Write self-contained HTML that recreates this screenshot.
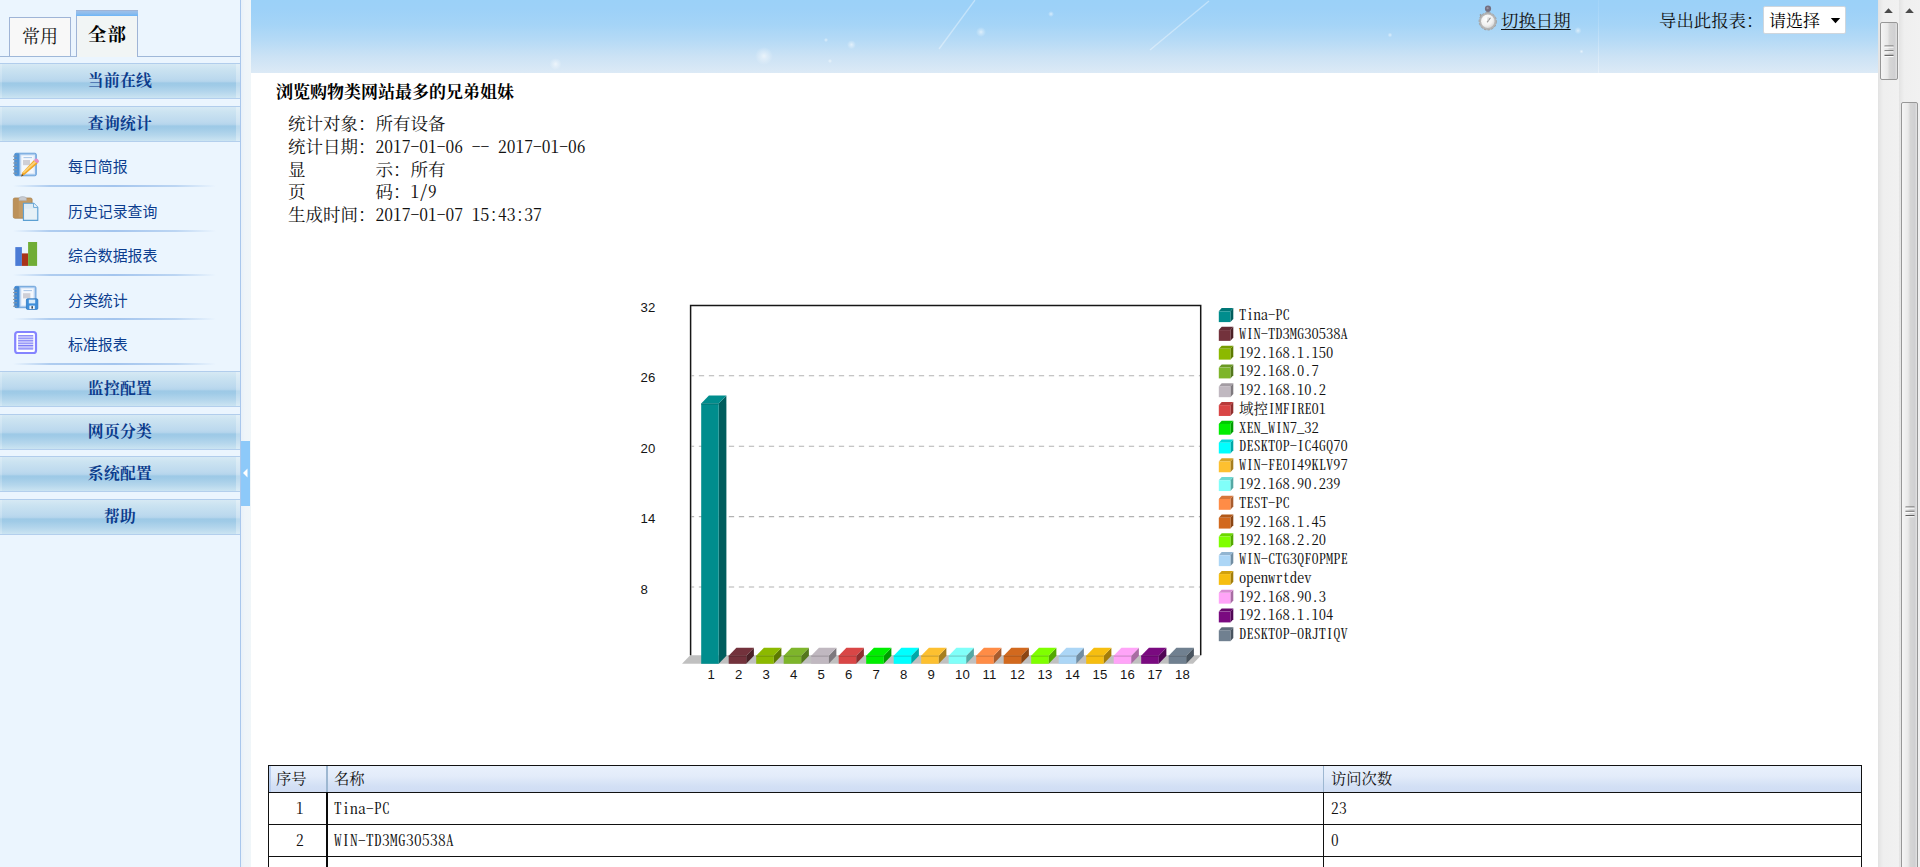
<!DOCTYPE html>
<html lang="zh-CN">
<head>
<meta charset="utf-8">
<title>浏览购物类网站最多的兄弟姐妹</title>
<style>
html,body{margin:0;padding:0;width:1920px;height:867px;overflow:hidden;background:#fff;}
body{position:relative;font-family:"Noto Serif CJK SC","Liberation Serif",serif;color:#000;}
.abs{position:absolute;}
.sun{font-family:"Noto Serif CJK SC","Liberation Serif",serif;font-feature-settings:"hwid";}
.hei{font-family:"Liberation Sans","Noto Sans CJK SC",sans-serif;}
/* ---------- sidebar ---------- */
#side{position:absolute;left:0;top:0;width:240px;height:867px;background:#ebf5fe;border-right:1px solid #a9c7ec;overflow:hidden;}
#tabline{position:absolute;left:0;top:56px;width:240px;height:1px;background:#9fb8d9;}
.tab{position:absolute;box-sizing:border-box;border:1px solid #9fb4d6;border-bottom:none;text-align:center;white-space:nowrap;}
#tab1{left:9px;top:17px;width:62px;height:39px;background:#f8f8f8;font-size:18px;line-height:35px;color:#111;}
#tab2{left:76px;top:10px;width:62px;height:47px;background:#f1f5f5;font-size:18.4px;line-height:46px;font-weight:bold;border-top:none;letter-spacing:1px;text-indent:1px;}
#tab2:before{content:"";position:absolute;left:-1px;right:-1px;top:0;height:6px;background:linear-gradient(#9cc0ea 0,#8fbdec 45%,#6db6f7 100%);border-top:1px solid #9fb4d6;box-sizing:border-box;}
.acc{position:absolute;left:0;width:240px;height:36px;box-sizing:border-box;border-top:1px solid #b1cdec;border-bottom:1px solid #b3cfed;
 background:linear-gradient(#d6e9f4 0,#cbe3f1 15%,#bcd9ee 44%,#b5d5ec 51%,#9dc9e6 56%,#a0cbe7 63%,#b4d6ec 82%,#cbe4f2 100%);
 text-align:center;font-weight:bold;font-size:15.8px;line-height:31px;color:#0b3b8c;letter-spacing:0.3px;}
.acc:after{content:"";position:absolute;left:0;right:0;top:0;bottom:0;border-left:2px solid rgba(255,255,255,.18);border-right:4px solid rgba(255,255,255,.3);}
.mi{position:absolute;left:68px;font-size:14.9px;line-height:20px;color:#0c3d8e;white-space:nowrap;}
.sep{position:absolute;left:13px;width:203px;height:2px;background:linear-gradient(90deg,rgba(168,200,238,0) 0,rgba(168,200,238,.9) 18%,#a4c5ee 50%,rgba(168,200,238,.7) 80%,rgba(168,200,238,0) 100%);}
.ico{position:absolute;left:12px;width:26px;height:26px;}
/* ---------- splitter ---------- */
#split{position:absolute;left:241px;top:0;width:10px;height:867px;background:linear-gradient(90deg,#e8f1f9,#eff5f9 40%,#f0f6f9);}
#handle{position:absolute;left:241px;top:441px;width:9px;height:64.5px;background:#8dc9f9;}
.tc{position:absolute;font-size:15.3px;line-height:22px;margin-top:-1px;letter-spacing:0.35px;white-space:nowrap;color:#111;}
/* ---------- main ---------- */
#main{position:absolute;left:251px;top:0;width:1627px;height:867px;background:#fff;overflow:hidden;}
#band{position:absolute;left:0;top:0;width:1627px;height:73px;background:linear-gradient(#9bd1f8 0,#9dd1f8 12%,#a4d4f7 33%,#b5daf6 55%,#cbe2f5 77%,#dceaf6 100%);}
</style>
</head>
<body>
<div id="side">
  <div id="tabline"></div>
  <div class="tab sun" id="tab1">常用</div>
  <div class="tab sun" id="tab2">全部</div>
  <div class="acc sun" style="top:63px">当前在线</div>
  <div class="acc sun" style="top:106px">查询统计</div>
  <div class="mi hei" style="top:157px">每日简报</div>
  <div class="sep" style="top:185px"></div>
  <div class="mi hei" style="top:202px">历史记录查询</div>
  <div class="sep" style="top:230px"></div>
  <div class="mi hei" style="top:246px">综合数据报表</div>
  <div class="sep" style="top:274px"></div>
  <div class="mi hei" style="top:291px">分类统计</div>
  <div class="sep" style="top:318px"></div>
  <div class="mi hei" style="top:335px">标准报表</div>
  <div class="sep" style="top:363px"></div>

  <!-- icon 1: notebook + pencil -->
  <svg class="abs" style="left:12px;top:152px" width="28" height="26" viewBox="0 0 28 26">
    <rect x="2.6" y="1.2" width="21.8" height="22.6" rx="1.6" fill="#8db9e8" stroke="#6da3da" stroke-width="0.9"/>
    <rect x="2.6" y="1.2" width="4.6" height="22.6" rx="1.2" fill="#4f92d4"/>
    <rect x="8.4" y="2.6" width="14.6" height="19.8" fill="#dbe8f8"/>
    <rect x="9.6" y="3.8" width="12" height="17.4" fill="#f4f8fd"/>
    <rect x="11" y="8" width="7" height="5.2" fill="#cfcfd6"/>
    <path d="M11.5 5.6H20" stroke="#9fbfe4" stroke-width="0.9"/>
    <path d="M1 4.2H5M1 7.6H5M1 11H5M1 14.4H5M1 17.8H5M1 21.2H5" stroke="#8a97a6" stroke-width="1"/>
    <path d="M21.8 8.2 L25.6 11.6 L12.8 22.6 L9.2 24.6 L10.4 20.4 Z" fill="#f3a623"/>
    <path d="M22.6 9 L24.2 10.4 L12 21.2 L10.6 20.2 Z" fill="#fbd27a"/>
    <path d="M21.8 8.2 L23.6 6.6 Q24.6 6 25.6 7 L26.8 8.4 Q27.4 9.4 26.6 10.2 L25.6 11.6 Z" fill="#e58fc8"/>
    <path d="M9.2 24.6 L10 22 L11.6 23.4 Z" fill="#5a4630"/>
  </svg>
  <!-- icon 2: clipboard + paper -->
  <svg class="abs" style="left:12px;top:196px" width="28" height="26" viewBox="0 0 28 26">
    <rect x="1.3" y="2" width="18.8" height="20.2" rx="1.6" fill="#c39a62" stroke="#a77f4b" stroke-width="0.8"/>
    <rect x="1.7" y="2.4" width="5" height="19.4" fill="#b98d55" opacity=".7"/>
    <path d="M7 2.6 Q7 0.6 10.6 0.6 Q14.4 0.6 14.4 2.6 L14.4 4.4 L7 4.4 Z" fill="#c9ccd2" stroke="#a9adb5" stroke-width="0.6"/>
    <path d="M11.4 7.2 H21.6 L25.8 11.4 V24.4 H11.4 Z" fill="#dcebf5" stroke="#5b9fd2" stroke-width="1.1" stroke-linejoin="round"/>
    <path d="M21.6 7.2 V11.4 H25.8" fill="#f6fbff" stroke="#5b9fd2" stroke-width="0.9" stroke-linejoin="round"/>
    <rect x="12.6" y="12.6" width="12" height="10.6" fill="#e9f3f8" opacity=".8"/>
  </svg>
  <!-- icon 3: bar chart -->
  <svg class="abs" style="left:12px;top:240px" width="28" height="28" viewBox="0 0 28 28">
    <rect x="3.3" y="7.1" width="6.6" height="18.8" fill="#4b7bd5"/>
    <rect x="9.9" y="13.4" width="6.2" height="12.5" fill="#a93319"/>
    <rect x="16.1" y="2" width="9" height="23.9" fill="#70ad35"/>
  </svg>
  <!-- icon 4: notebook + floppy -->
  <svg class="abs" style="left:12px;top:285px" width="28" height="26" viewBox="0 0 28 26">
    <rect x="2.6" y="1.3" width="21.4" height="21.4" rx="1.6" fill="#8db9e8" stroke="#6da3da" stroke-width="0.9"/>
    <rect x="2.6" y="1.3" width="4.6" height="21.4" rx="1.2" fill="#3f86cf"/>
    <rect x="8.4" y="2.6" width="14.2" height="18.8" fill="#dbe8f8"/>
    <rect x="9.6" y="3.8" width="11.6" height="16.4" fill="#f4f8fd"/>
    <rect x="11" y="8.2" width="7.4" height="5.2" fill="#cfcfd6"/>
    <path d="M11.5 5.6H20" stroke="#9fbfe4" stroke-width="0.9"/>
    <path d="M1 4.2H5M1 7.6H5M1 11H5M1 14.4H5M1 17.8H5M1 21.2H5" stroke="#8a97a6" stroke-width="1"/>
    <rect x="14.4" y="13.8" width="11.4" height="10.6" rx="1.2" fill="#3f8fda" stroke="#2f78c2" stroke-width="0.8"/>
    <rect x="16.8" y="14.6" width="6.4" height="3.8" fill="#d9ecfb"/>
    <rect x="17.4" y="20.6" width="5.4" height="3.4" fill="#eef6fd"/>
    <rect x="19.4" y="21.2" width="1.6" height="2.4" fill="#3a4a5a"/>
  </svg>
  <!-- icon 5: list -->
  <svg class="abs" style="left:12px;top:329px" width="28" height="28" viewBox="0 0 28 28">
    <rect x="3.2" y="3" width="20.8" height="21" rx="2.6" fill="#fff" stroke="#8484ff" stroke-width="2.2"/>
    <rect x="6.2" y="6.2" width="15" height="14.8" fill="#b9b9fa"/>
    <path d="M6.2 6.7H21.2M6.2 11.7H21.2M6.2 16.6H21.2" stroke="#7d7df6" stroke-width="1.1"/>
    <path d="M6.2 9.3H21.2M6.2 14.2H21.2M6.2 19.3H21.2" stroke="#9a9af9" stroke-width="1.6"/>
    <path d="M6.2 8H21.2M6.2 10.6H21.2M6.2 13H21.2M6.2 15.5H21.2M6.2 18H21.2" stroke="#e6e6fd" stroke-width="0.7"/>
  </svg>
  <div class="acc sun" style="top:371px">监控配置</div>
  <div class="acc sun" style="top:414px">网页分类</div>
  <div class="acc sun" style="top:456px">系统配置</div>
  <div class="acc sun" style="top:499px">帮助</div>
</div>
<div id="split"></div>
<div id="handle"><svg width="9" height="64" style="display:block"><path d="M2 32 L6.5 27.5 L6.5 36.5 Z" fill="#fff"/></svg></div>
<div id="main">
  <div id="band"></div>
  <svg class="abs" style="left:0;top:0" width="1627" height="73" viewBox="251 0 1627 73">
    <defs><radialGradient id="glow"><stop offset="0" stop-color="#fff" stop-opacity=".6"/><stop offset=".35" stop-color="#fff" stop-opacity=".35"/><stop offset="1" stop-color="#fff" stop-opacity="0"/></radialGradient></defs>
    <path d="M975 0 L939 49" stroke="#fff" stroke-opacity=".38" stroke-width="1.3"/>
    <path d="M1209 1 L1150 50" stroke="#fff" stroke-opacity=".38" stroke-width="1.3"/>
    <circle cx="764" cy="56" r="9" fill="url(#glow)"/>
    <circle cx="555.6" cy="64" r="6" fill="url(#glow)"/>
    <circle cx="851.5" cy="44.7" r="4.5" fill="url(#glow)"/>
    <circle cx="981" cy="32" r="5" fill="url(#glow)"/>
    <circle cx="826" cy="40" r="2.2" fill="url(#glow)"/>
    <circle cx="830" cy="61" r="2.2" fill="url(#glow)"/>
    <circle cx="1051" cy="14" r="3" fill="url(#glow)"/>
    <circle cx="1390" cy="35" r="2.4" fill="url(#glow)"/>
    <circle cx="1578" cy="30.6" r="3.6" fill="url(#glow)"/>
    <circle cx="1581.5" cy="51.5" r="2.2" fill="url(#glow)"/>
  </svg>

  <div class="abs" style="left:1347px;top:0;width:1px;height:73px;background:linear-gradient(rgba(255,255,255,.08),rgba(255,255,255,.3));"></div>
  <svg class="abs" style="left:1226px;top:5px" width="22" height="27" viewBox="0 0 22 27">
    <defs><radialGradient id="face" cx=".4" cy=".35" r=".75"><stop offset="0" stop-color="#fff"/><stop offset=".6" stop-color="#f1f1f1"/><stop offset="1" stop-color="#cfcfcf"/></radialGradient></defs>
    <rect x="9.6" y="5.5" width="2.6" height="3" fill="#9a9a9e"/>
    <circle cx="11" cy="3.7" r="3.1" fill="#746f80"/>
    <circle cx="10.6" cy="3.2" r="1.1" fill="#9a96a6"/>
    <path d="M3 9.4 L5.2 11.6" stroke="#9b9b9b" stroke-width="1.6"/>
    <circle cx="10.8" cy="16.3" r="8.7" fill="#b5b5b5" stroke="#a2a2a2" stroke-width="1" stroke-dasharray="2.4 1.4"/>
    <circle cx="10.8" cy="16.3" r="6.7" fill="url(#face)"/>
    <path d="M10.4 16.8 L13.2 13.2" stroke="#9a9a9a" stroke-width="1.3" stroke-linecap="round"/>
    <path d="M10.8 16.2 L11.2 12.2" stroke="#d0d0d0" stroke-width="1"/>
  </svg>
  <div class="abs sun" style="left:1250px;top:8px;font-size:17.4px;line-height:24px;color:#111;text-decoration:underline;text-underline-offset:2px;white-space:nowrap;">切换日期</div>
  <div class="abs sun" style="left:1408px;top:8px;font-size:17.4px;line-height:24px;color:#111;white-space:nowrap;">导出此报表：</div>
  <div class="abs" style="left:1512px;top:6px;width:83px;height:28px;box-sizing:border-box;border:1px solid #cfd6dd;border-radius:2px;background:#fff;"></div>
  <div class="abs sun" style="left:1518px;top:8px;font-size:17px;line-height:24px;color:#000;white-space:nowrap;">请选择</div>
  <svg class="abs" style="left:1579px;top:17px" width="12" height="8"><path d="M0.8 1 L10.2 1 L5.5 6.2 Z" fill="#000"/></svg>

  <div class="abs sun" id="title" style="left:25px;top:79px;font-size:17px;line-height:24px;font-weight:700;white-space:nowrap;">浏览购物类网站最多的兄弟姐妹</div>
  <div class="abs sun" id="info" style="left:37px;top:112px;font-size:17.5px;line-height:22.8px;white-space:pre;color:#111;">统计对象：所有设备
统计日期：2017-01-06 -- 2017-01-06
显<span style="display:inline-block;width:70px"></span>示：所有
页<span style="display:inline-block;width:70px"></span>码：1/9
生成时间：2017-01-07 15:43:37</div>
<!--CHART_START-->
<svg class="abs" id="chart" style="left:370px;top:290px" width="760" height="410" viewBox="0 0 760 410">
<line x1="70.6" y1="85.8" x2="579.7" y2="85.8" stroke="#b2b2b2" stroke-width="1.1" stroke-dasharray="5.3 4.7" stroke-dashoffset="2.75"/>
<line x1="70.6" y1="156.2" x2="579.7" y2="156.2" stroke="#b2b2b2" stroke-width="1.1" stroke-dasharray="5.3 4.7" stroke-dashoffset="2.75"/>
<line x1="70.6" y1="226.6" x2="579.7" y2="226.6" stroke="#b2b2b2" stroke-width="1.1" stroke-dasharray="5.3 4.7" stroke-dashoffset="2.75"/>
<line x1="70.6" y1="297.0" x2="579.7" y2="297.0" stroke="#b2b2b2" stroke-width="1.1" stroke-dasharray="5.3 4.7" stroke-dashoffset="2.75"/>
<polygon points="69.2,365.2 580.2,365.2 572,373.8 61,373.8" fill="#c0c0c0"/>
<path d="M69.6 365.3 L69.6 15.4 L579.7 15.4 L579.7 365.3" fill="none" stroke="#161616" stroke-width="1.5"/>
<polygon points="97.7,113.6 105.4,105.6 105.4,365.8 97.7,373.8" fill="#005d5d"/>
<polygon points="80.2,113.6 87.9,105.6 105.4,105.6 97.7,113.6" fill="#008d8d"/>
<rect x="80.2" y="113.6" width="17.5" height="260.2" fill="#008d8d"/>
<line x1="80.2" y1="114.0" x2="97.7" y2="114.0" stroke="#007070" stroke-width="1"/>
<polygon points="125.2,365.7 132.9,357.7 132.9,365.8 125.2,373.8" fill="#4b2127"/>
<polygon points="107.7,365.7 115.4,357.7 132.9,357.7 125.2,365.7" fill="#73323c"/>
<rect x="107.7" y="365.7" width="17.5" height="8.1" fill="#73323c"/>
<line x1="107.7" y1="366.1" x2="125.2" y2="366.1" stroke="#5c2830" stroke-width="1"/>
<polygon points="152.7,365.7 160.4,357.7 160.4,365.8 152.7,373.8" fill="#5c7a00"/>
<polygon points="135.2,365.7 142.9,357.7 160.4,357.7 152.7,365.7" fill="#8cb900"/>
<rect x="135.2" y="365.7" width="17.5" height="8.1" fill="#8cb900"/>
<line x1="135.2" y1="366.1" x2="152.7" y2="366.1" stroke="#709400" stroke-width="1"/>
<polygon points="180.2,365.7 187.9,357.7 187.9,365.8 180.2,373.8" fill="#53771c"/>
<polygon points="162.7,365.7 170.4,357.7 187.9,357.7 180.2,365.7" fill="#7eb52b"/>
<rect x="162.7" y="365.7" width="17.5" height="8.1" fill="#7eb52b"/>
<line x1="162.7" y1="366.1" x2="180.2" y2="366.1" stroke="#649022" stroke-width="1"/>
<polygon points="207.7,365.7 215.4,357.7 215.4,365.8 207.7,373.8" fill="#7e797e"/>
<polygon points="190.2,365.7 197.9,357.7 215.4,357.7 207.7,365.7" fill="#c0b8c0"/>
<rect x="190.2" y="365.7" width="17.5" height="8.1" fill="#c0b8c0"/>
<line x1="190.2" y1="366.1" x2="207.7" y2="366.1" stroke="#999399" stroke-width="1"/>
<polygon points="235.2,365.7 242.9,357.7 242.9,365.8 235.2,373.8" fill="#8f2e2e"/>
<polygon points="217.7,365.7 225.4,357.7 242.9,357.7 235.2,365.7" fill="#d94646"/>
<rect x="217.7" y="365.7" width="17.5" height="8.1" fill="#d94646"/>
<line x1="217.7" y1="366.1" x2="235.2" y2="366.1" stroke="#ad3838" stroke-width="1"/>
<polygon points="262.7,365.7 270.4,357.7 270.4,365.8 262.7,373.8" fill="#009d00"/>
<polygon points="245.2,365.7 252.9,357.7 270.4,357.7 262.7,365.7" fill="#00ee00"/>
<rect x="245.2" y="365.7" width="17.5" height="8.1" fill="#00ee00"/>
<line x1="245.2" y1="366.1" x2="262.7" y2="366.1" stroke="#00be00" stroke-width="1"/>
<polygon points="290.2,365.7 297.9,357.7 297.9,365.8 290.2,373.8" fill="#00a8a8"/>
<polygon points="272.7,365.7 280.4,357.7 297.9,357.7 290.2,365.7" fill="#00ffff"/>
<rect x="272.7" y="365.7" width="17.5" height="8.1" fill="#00ffff"/>
<line x1="272.7" y1="366.1" x2="290.2" y2="366.1" stroke="#00cccc" stroke-width="1"/>
<polygon points="317.7,365.7 325.4,357.7 325.4,365.8 317.7,373.8" fill="#a67e1f"/>
<polygon points="300.2,365.7 307.9,357.7 325.4,357.7 317.7,365.7" fill="#fdc030"/>
<rect x="300.2" y="365.7" width="17.5" height="8.1" fill="#fdc030"/>
<line x1="300.2" y1="366.1" x2="317.7" y2="366.1" stroke="#ca9926" stroke-width="1"/>
<polygon points="345.2,365.7 352.9,357.7 352.9,365.8 345.2,373.8" fill="#54a8a4"/>
<polygon points="327.7,365.7 335.4,357.7 352.9,357.7 345.2,365.7" fill="#80fff9"/>
<rect x="327.7" y="365.7" width="17.5" height="8.1" fill="#80fff9"/>
<line x1="327.7" y1="366.1" x2="345.2" y2="366.1" stroke="#66ccc7" stroke-width="1"/>
<polygon points="372.7,365.7 380.4,357.7 380.4,365.8 372.7,373.8" fill="#a85c2e"/>
<polygon points="355.2,365.7 362.9,357.7 380.4,357.7 372.7,365.7" fill="#ff8c46"/>
<rect x="355.2" y="365.7" width="17.5" height="8.1" fill="#ff8c46"/>
<line x1="355.2" y1="366.1" x2="372.7" y2="366.1" stroke="#cc7038" stroke-width="1"/>
<polygon points="400.2,365.7 407.9,357.7 407.9,365.8 400.2,373.8" fill="#8a4513"/>
<polygon points="382.7,365.7 390.4,357.7 407.9,357.7 400.2,365.7" fill="#d2691e"/>
<rect x="382.7" y="365.7" width="17.5" height="8.1" fill="#d2691e"/>
<line x1="382.7" y1="366.1" x2="400.2" y2="366.1" stroke="#a85418" stroke-width="1"/>
<polygon points="427.7,365.7 435.4,357.7 435.4,365.8 427.7,373.8" fill="#53a800"/>
<polygon points="410.2,365.7 417.9,357.7 435.4,357.7 427.7,365.7" fill="#7fff00"/>
<rect x="410.2" y="365.7" width="17.5" height="8.1" fill="#7fff00"/>
<line x1="410.2" y1="366.1" x2="427.7" y2="366.1" stroke="#65cc00" stroke-width="1"/>
<polygon points="455.2,365.7 462.9,357.7 462.9,365.8 455.2,373.8" fill="#718da2"/>
<polygon points="437.7,365.7 445.4,357.7 462.9,357.7 455.2,365.7" fill="#acd6f6"/>
<rect x="437.7" y="365.7" width="17.5" height="8.1" fill="#acd6f6"/>
<line x1="437.7" y1="366.1" x2="455.2" y2="366.1" stroke="#89abc4" stroke-width="1"/>
<polygon points="482.7,365.7 490.4,357.7 490.4,365.8 482.7,373.8" fill="#a27d0a"/>
<polygon points="465.2,365.7 472.9,357.7 490.4,357.7 482.7,365.7" fill="#f6be10"/>
<rect x="465.2" y="365.7" width="17.5" height="8.1" fill="#f6be10"/>
<line x1="465.2" y1="366.1" x2="482.7" y2="366.1" stroke="#c4980c" stroke-width="1"/>
<polygon points="510.2,365.7 517.9,357.7 517.9,365.8 510.2,373.8" fill="#a86ca3"/>
<polygon points="492.7,365.7 500.4,357.7 517.9,357.7 510.2,365.7" fill="#ffa4f8"/>
<rect x="492.7" y="365.7" width="17.5" height="8.1" fill="#ffa4f8"/>
<line x1="492.7" y1="366.1" x2="510.2" y2="366.1" stroke="#cc83c6" stroke-width="1"/>
<polygon points="537.7,365.7 545.4,357.7 545.4,365.8 537.7,373.8" fill="#500654"/>
<polygon points="520.2,365.7 527.9,357.7 545.4,357.7 537.7,365.7" fill="#7a0a80"/>
<rect x="520.2" y="365.7" width="17.5" height="8.1" fill="#7a0a80"/>
<line x1="520.2" y1="366.1" x2="537.7" y2="366.1" stroke="#610866" stroke-width="1"/>
<polygon points="565.2,365.7 572.9,357.7 572.9,365.8 565.2,373.8" fill="#49545f"/>
<polygon points="547.7,365.7 555.4,357.7 572.9,357.7 565.2,365.7" fill="#708090"/>
<rect x="547.7" y="365.7" width="17.5" height="8.1" fill="#708090"/>
<line x1="547.7" y1="366.1" x2="565.2" y2="366.1" stroke="#596673" stroke-width="1"/>
<g font-family="Liberation Sans, sans-serif" font-size="13.2" fill="#151515">
<text x="86.6" y="388.5">1</text>
<text x="114.1" y="388.5">2</text>
<text x="141.6" y="388.5">3</text>
<text x="169.1" y="388.5">4</text>
<text x="196.6" y="388.5">5</text>
<text x="224.1" y="388.5">6</text>
<text x="251.6" y="388.5">7</text>
<text x="279.1" y="388.5">8</text>
<text x="306.6" y="388.5">9</text>
<text x="334.1" y="388.5">10</text>
<text x="361.6" y="388.5">11</text>
<text x="389.1" y="388.5">12</text>
<text x="416.6" y="388.5">13</text>
<text x="444.1" y="388.5">14</text>
<text x="471.6" y="388.5">15</text>
<text x="499.1" y="388.5">16</text>
<text x="526.6" y="388.5">17</text>
<text x="554.1" y="388.5">18</text>
<text x="19.6" y="22.0">32</text>
<text x="19.6" y="92.4">26</text>
<text x="19.6" y="162.8">20</text>
<text x="19.6" y="233.2">14</text>
<text x="19.6" y="303.6">8</text>
</g>
<g font-family="Noto Serif CJK SC, Liberation Serif, serif" font-size="14.5" fill="#111" style="font-feature-settings:'hwid'">
<polygon points="609.4,21.3 612.3,18.1 612.3,28.9 609.4,32.1" fill="#005d5d"/>
<polygon points="597.8,21.3 600.7,18.1 612.3,18.1 609.4,21.3" fill="#007777"/>
<rect x="597.8" y="21.3" width="11.6" height="10.8" fill="#008d8d"/>
<text x="618.0" y="30.1">Tina-PC</text>
<polygon points="609.4,40.07 612.3,36.87 612.3,47.67 609.4,50.87" fill="#4b2127"/>
<polygon points="597.8,40.07 600.7,36.87 612.3,36.87 609.4,40.07" fill="#612a33"/>
<rect x="597.8" y="40.07" width="11.6" height="10.8" fill="#73323c"/>
<text x="618.0" y="48.87">WIN-TD3MG30538A</text>
<polygon points="609.4,58.84 612.3,55.64 612.3,66.44 609.4,69.64" fill="#5c7a00"/>
<polygon points="597.8,58.84 600.7,55.64 612.3,55.64 609.4,58.84" fill="#779d00"/>
<rect x="597.8" y="58.84" width="11.6" height="10.8" fill="#8cb900"/>
<text x="618.0" y="67.64">192.168.1.150</text>
<polygon points="609.4,77.61 612.3,74.41 612.3,85.21 609.4,88.41" fill="#53771c"/>
<polygon points="597.8,77.61 600.7,74.41 612.3,74.41 609.4,77.61" fill="#6b9924"/>
<rect x="597.8" y="77.61" width="11.6" height="10.8" fill="#7eb52b"/>
<text x="618.0" y="86.41">192.168.0.7</text>
<polygon points="609.4,96.38 612.3,93.18 612.3,103.98 609.4,107.18" fill="#7e797e"/>
<polygon points="597.8,96.38 600.7,93.18 612.3,93.18 609.4,96.38" fill="#a39ca3"/>
<rect x="597.8" y="96.38" width="11.6" height="10.8" fill="#c0b8c0"/>
<text x="618.0" y="105.18">192.168.10.2</text>
<polygon points="609.4,115.15 612.3,111.95 612.3,122.75 609.4,125.95" fill="#8f2e2e"/>
<polygon points="597.8,115.15 600.7,111.95 612.3,111.95 609.4,115.15" fill="#b83b3b"/>
<rect x="597.8" y="115.15" width="11.6" height="10.8" fill="#d94646"/>
<text x="618.0" y="123.95">域控IMFIRE01</text>
<polygon points="609.4,133.92 612.3,130.72 612.3,141.52 609.4,144.72" fill="#009d00"/>
<polygon points="597.8,133.92 600.7,130.72 612.3,130.72 609.4,133.92" fill="#00ca00"/>
<rect x="597.8" y="133.92" width="11.6" height="10.8" fill="#00ee00"/>
<text x="618.0" y="142.72">XEN_WIN7_32</text>
<polygon points="609.4,152.69 612.3,149.49 612.3,160.29 609.4,163.49" fill="#00a8a8"/>
<polygon points="597.8,152.69 600.7,149.49 612.3,149.49 609.4,152.69" fill="#00d8d8"/>
<rect x="597.8" y="152.69" width="11.6" height="10.8" fill="#00ffff"/>
<text x="618.0" y="161.49">DESKTOP-IC4GQ70</text>
<polygon points="609.4,171.46 612.3,168.26 612.3,179.06 609.4,182.26" fill="#a67e1f"/>
<polygon points="597.8,171.46 600.7,168.26 612.3,168.26 609.4,171.46" fill="#d7a328"/>
<rect x="597.8" y="171.46" width="11.6" height="10.8" fill="#fdc030"/>
<text x="618.0" y="180.26">WIN-FEOI49KLV97</text>
<polygon points="609.4,190.23 612.3,187.03 612.3,197.83 609.4,201.03" fill="#54a8a4"/>
<polygon points="597.8,190.23 600.7,187.03 612.3,187.03 609.4,190.23" fill="#6cd8d3"/>
<rect x="597.8" y="190.23" width="11.6" height="10.8" fill="#80fff9"/>
<text x="618.0" y="199.03">192.168.90.239</text>
<polygon points="609.4,209.0 612.3,205.8 612.3,216.6 609.4,219.8" fill="#a85c2e"/>
<polygon points="597.8,209.0 600.7,205.8 612.3,205.8 609.4,209.0" fill="#d8773b"/>
<rect x="597.8" y="209.0" width="11.6" height="10.8" fill="#ff8c46"/>
<text x="618.0" y="217.8">TEST-PC</text>
<polygon points="609.4,227.77 612.3,224.57 612.3,235.37 609.4,238.57" fill="#8a4513"/>
<polygon points="597.8,227.77 600.7,224.57 612.3,224.57 609.4,227.77" fill="#b25919"/>
<rect x="597.8" y="227.77" width="11.6" height="10.8" fill="#d2691e"/>
<text x="618.0" y="236.57">192.168.1.45</text>
<polygon points="609.4,246.54 612.3,243.34 612.3,254.14 609.4,257.34" fill="#53a800"/>
<polygon points="597.8,246.54 600.7,243.34 612.3,243.34 609.4,246.54" fill="#6bd800"/>
<rect x="597.8" y="246.54" width="11.6" height="10.8" fill="#7fff00"/>
<text x="618.0" y="255.34">192.168.2.20</text>
<polygon points="609.4,265.31 612.3,262.11 612.3,272.91 609.4,276.11" fill="#718da2"/>
<polygon points="597.8,265.31 600.7,262.11 612.3,262.11 609.4,265.31" fill="#92b5d1"/>
<rect x="597.8" y="265.31" width="11.6" height="10.8" fill="#acd6f6"/>
<text x="618.0" y="274.11">WIN-CTG3QFOPMPE</text>
<polygon points="609.4,284.08 612.3,280.88 612.3,291.68 609.4,294.88" fill="#a27d0a"/>
<polygon points="597.8,284.08 600.7,280.88 612.3,280.88 609.4,284.08" fill="#d1a10d"/>
<rect x="597.8" y="284.08" width="11.6" height="10.8" fill="#f6be10"/>
<text x="618.0" y="292.88">openwrtdev</text>
<polygon points="609.4,302.85 612.3,299.65 612.3,310.45 609.4,313.65" fill="#a86ca3"/>
<polygon points="597.8,302.85 600.7,299.65 612.3,299.65 609.4,302.85" fill="#d88bd2"/>
<rect x="597.8" y="302.85" width="11.6" height="10.8" fill="#ffa4f8"/>
<text x="618.0" y="311.65">192.168.90.3</text>
<polygon points="609.4,321.62 612.3,318.42 612.3,329.22 609.4,332.42" fill="#500654"/>
<polygon points="597.8,321.62 600.7,318.42 612.3,318.42 609.4,321.62" fill="#67086c"/>
<rect x="597.8" y="321.62" width="11.6" height="10.8" fill="#7a0a80"/>
<text x="618.0" y="330.42">192.168.1.104</text>
<polygon points="609.4,340.39 612.3,337.19 612.3,347.99 609.4,351.19" fill="#49545f"/>
<polygon points="597.8,340.39 600.7,337.19 612.3,337.19 609.4,340.39" fill="#5f6c7a"/>
<rect x="597.8" y="340.39" width="11.6" height="10.8" fill="#708090"/>
<text x="618.0" y="349.19">DESKTOP-ORJTIQV</text>
</g>
</svg>
<!--CHART_END-->

  <div class="abs" id="tbl" style="left:17px;top:765px;width:1594px;height:110px;">
    <div class="abs" style="left:0;top:0;width:1594px;height:28px;background:linear-gradient(#e9f1fc 0,#e3ecfa 40%,#d3e0f5 75%,#cfdcf3 100%);"></div>
    <div class="abs" style="left:1px;top:1px;width:2px;height:26px;background:rgba(170,195,235,.7);"></div>
    <!-- horizontal lines -->
    <div class="abs" style="left:0;top:0;width:1594px;height:1px;background:#111;"></div>
    <div class="abs" style="left:0;top:27px;width:1594px;height:1px;background:#111;"></div>
    <div class="abs" style="left:0;top:59px;width:1594px;height:1px;background:#111;"></div>
    <div class="abs" style="left:0;top:91px;width:1594px;height:1px;background:#111;"></div>
    <!-- vertical lines -->
    <div class="abs" style="left:0;top:0;width:1px;height:110px;background:#111;"></div>
    <div class="abs" style="left:1593px;top:0;width:1px;height:110px;background:#111;"></div>
    <div class="abs" style="left:58px;top:1px;width:2px;height:26px;background:#9db7d1;"></div>
    <div class="abs" style="left:58px;top:27px;width:2px;height:83px;background:#0a0a0a;"></div>
    <div class="abs" style="left:1055px;top:1px;width:1px;height:26px;background:#9db7d1;"></div>
    <div class="abs" style="left:1055px;top:27px;width:1px;height:83px;background:#111;"></div>
    <div class="tc sun" style="left:8px;top:2px;font-size:15.3px;letter-spacing:0;">序号</div>
    <div class="tc sun" style="left:66px;top:2px;font-size:15.3px;letter-spacing:0;">名称</div>
    <div class="tc sun" style="left:1063px;top:2px;font-size:15.3px;letter-spacing:0;">访问次数</div>
    <div class="tc sun" style="left:28px;top:32px;">1</div>
    <div class="tc sun" style="left:66px;top:32px;">Tina-PC</div>
    <div class="tc sun" style="left:1063px;top:32px;">23</div>
    <div class="tc sun" style="left:28px;top:64px;">2</div>
    <div class="tc sun" style="left:66px;top:64px;">WIN-TD3MG30538A</div>
    <div class="tc sun" style="left:1063px;top:64px;">0</div>
  </div>


</div>

<div class="abs" id="sb1" style="left:1878px;top:0;width:21px;height:867px;background:linear-gradient(90deg,#e2e2e2 0,#efefef 25%,#f1f1f1 100%);">
  <svg class="abs" style="left:0;top:0" width="21" height="20"><path d="M6.2 13 L10.5 8.2 L14.8 13 Z" fill="#4a4a4a"/></svg>
  <div class="abs" style="left:1.5px;top:22px;width:18px;height:58px;box-sizing:border-box;border:1px solid #979797;border-radius:2px;background:linear-gradient(90deg,#f5f5f5 0,#e9e9e9 40%,#d6d6d6 55%,#d0d0d2 85%,#e2e2e2 100%);"></div>
  <svg class="abs" style="left:5.5px;top:44px" width="11" height="15"><path d="M0.5 2H9.5M0.5 6.7H9.5M0.5 11.4H9.5" stroke="#6a6a6a" stroke-width="1.1"/><path d="M0.5 3.1H9.5M0.5 7.8H9.5M0.5 12.5H9.5" stroke="#fff" stroke-width="1"/></svg>
</div>
<div class="abs" id="sb2" style="left:1899px;top:0;width:21px;height:867px;background:linear-gradient(90deg,#e3e3e3 0,#efefef 25%,#f1f1f1 100%);">
  <svg class="abs" style="left:0;top:0" width="21" height="20"><path d="M6.2 13 L10.5 8.2 L14.8 13 Z" fill="#4a4a4a"/></svg>
  <div class="abs" style="left:1.5px;top:102px;width:17.5px;height:790px;box-sizing:border-box;border:1px solid #979797;border-radius:2px;background:linear-gradient(90deg,#f5f5f5 0,#e9e9e9 40%,#d6d6d6 55%,#d0d0d2 85%,#e2e2e2 100%);"></div>
  <svg class="abs" style="left:5.5px;top:505px" width="11" height="14"><path d="M0.5 2H9.5M0.5 6.3H9.5M0.5 10.6H9.5" stroke="#606060" stroke-width="1.1"/><path d="M0.5 3.1H9.5M0.5 7.4H9.5M0.5 11.7H9.5" stroke="#fff" stroke-width="1"/></svg>
</div>

</body>
</html>
